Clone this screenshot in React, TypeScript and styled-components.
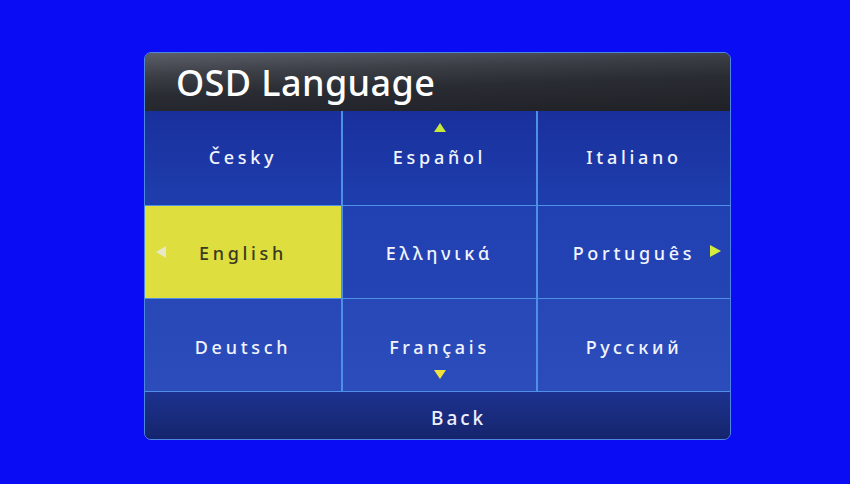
import React from "react";
import styled, { createGlobalStyle } from "styled-components";

const Global = createGlobalStyle`
  html, body { margin: 0; padding: 0; background: #0a0cf3; }
  body { font-family: "Noto Sans", "DejaVu Sans", sans-serif; }
`;

const Page = styled.div`
  width: 850px;
  height: 484px;
  box-sizing: border-box;
  padding: 52px 0 0 144px;
  background: #0a0cf3;
`;

const Panel = styled.div`
  width: 587px;
  height: 388px;
  border-radius: 7px;
  overflow: hidden;
  display: flex;
  flex-direction: column;
  border: 1px solid #4d86e0;
  box-sizing: border-box;
  background: #1e38a4;
`;

const Header = styled.div`
  height: 58px;
  flex: none;
  display: flex;
  align-items: center;
  padding-left: 31px;
  background: linear-gradient(178deg, #5c5f68 0%, #3c3e46 30%, #2a2c33 55%, #1f2127 100%);
  color: #ffffff;
  font-family: "Noto Sans", sans-serif;
  font-weight: 500;
  font-size: 36px;
  letter-spacing: 0.4px;
  box-sizing: border-box;
  padding-top: 0px;
`;

const Grid = styled.div`
  display: grid;
  grid-template-columns: 196px 195px 1fr;
  grid-template-rows: 95px 93px 93px;
  flex: none;
`;

const Cell = styled.div<{ $row: number; $selected?: boolean; $col: number }>`
  position: relative;
  display: flex;
  align-items: center;
  justify-content: center;
  box-sizing: border-box;
  border-left: ${(p) => (p.$col > 0 ? "2px solid #4f8fe6" : "none")};
  border-bottom: 1px solid #4f8fe6;
  background: ${(p) =>
    p.$selected
      ? "#dede3e"
      : p.$row === 0
      ? "linear-gradient(180deg, #19309c, #1f3eae)"
      : p.$row === 1
      ? "linear-gradient(180deg, #2140b2, #2444b4)"
      : "linear-gradient(180deg, #2848b8, #2b4cba)"};
  color: ${(p) => (p.$selected ? "#3a3a20" : "#f2f4ff")};
  font-size: 18px;
  font-weight: 500;
  letter-spacing: 3.7px;
  padding-bottom: ${(p) => (p.$row === 0 ? 2 : 0)}px;
  padding-top: ${(p) => (p.$row === 1 ? 2 : p.$row === 2 ? 4 : 0)}px;
`;

const Arrow = styled.div<{ $dir: "up" | "down" | "left" | "right"; $color: string }>`
  position: absolute;
  width: 0;
  height: 0;
  ${(p) =>
    p.$dir === "up"
      ? `top: 12px; left: 50%; margin-left: -6px; border-left: 6px solid transparent; border-right: 6px solid transparent; border-bottom: 9px solid ${p.$color};`
      : p.$dir === "down"
      ? `bottom: 12px; left: 50%; margin-left: -6px; border-left: 6px solid transparent; border-right: 6px solid transparent; border-top: 9px solid ${p.$color};`
      : p.$dir === "left"
      ? `left: 11px; top: 50%; margin-top: -6px; border-top: 6px solid transparent; border-bottom: 6px solid transparent; border-right: 10px solid ${p.$color};`
      : `right: 9px; top: 50%; margin-top: -7px; border-top: 6px solid transparent; border-bottom: 6px solid transparent; border-left: 11px solid ${p.$color};`}
`;

const Back = styled.div`
  flex: 1;
  display: flex;
  align-items: center;
  justify-content: center;
  padding-left: 42px;
  padding-top: 5px;
  color: #eef0ff;
  font-size: 19px;
  font-weight: 500;
  letter-spacing: 2.9px;
  background: linear-gradient(180deg, #1d3290 0%, #182a7a 60%, #15246c 100%);
`;

type Item = { label: string; arrow?: { dir: "up" | "down" | "left" | "right"; color: string }; selected?: boolean };

const rows: Item[][] = [
  [
    { label: "Česky" },
    { label: "Español", arrow: { dir: "up", color: "#c9e83c" } },
    { label: "Italiano" },
  ],
  [
    { label: "English", selected: true, arrow: { dir: "left", color: "#e8e8c8" } },
    { label: "Ελληνικά" },
    { label: "Português", arrow: { dir: "right", color: "#d6ec3c" } },
  ],
  [
    { label: "Deutsch" },
    { label: "Français", arrow: { dir: "down", color: "#f0e040" } },
    { label: "Русский" },
  ],
];

export default function App() {
  return (
    <>
      <Global />
      <Page>
        <Panel>
          <Header>OSD Language</Header>
          <Grid>
            {rows.map((row, r) =>
              row.map((item, c) => (
                <Cell key={`${r}-${c}`} $row={r} $col={c} $selected={item.selected}>
                  {item.arrow && <Arrow $dir={item.arrow.dir} $color={item.arrow.color} />}
                  {item.label}
                </Cell>
              ))
            )}
          </Grid>
          <Back>Back</Back>
        </Panel>
      </Page>
    </>
  );
}
